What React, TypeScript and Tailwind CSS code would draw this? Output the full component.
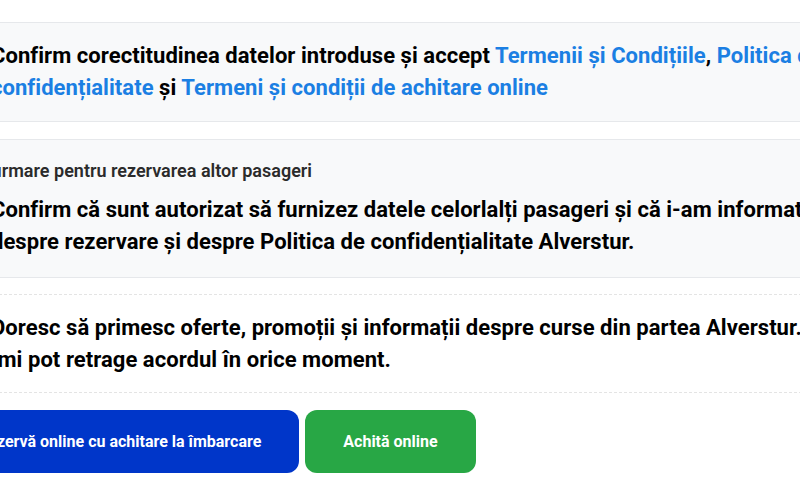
import React from 'react';

const link = 'text-[#1b7fe3] hover:underline';

function Check() {
  return <span className="mt-[6px] h-5 w-5 flex-shrink-0 rounded border border-gray-400 bg-white" />;
}

export default function App() {
  return (
    <div className="h-[500px] w-[800px] overflow-hidden bg-white" style={{ fontFamily: 'Roboto, "Noto Sans", sans-serif' }}>
      <div className="ml-[-66px] w-[918px] pt-[22px] text-black">

        {/* Terms */}
        <div className="mb-[17px] border border-[#e6e8eb] bg-[#f8f9fa] px-6 py-[17px]">
          <label className="flex gap-[12px] text-[22px] font-bold leading-[32px] tracking-[0.05px]">
            <Check />
            <span>
              Confirm corectitudinea datelor introduse și accept{' '}
              <a className={link}>Termenii și Condițiile</a>,{' '}
              <a className={link}>Politica de confidențialitate</a> și{' '}
              <a className={link}>Termeni și condiții de achitare online</a>
            </span>
          </label>
        </div>

        {/* Other passengers */}
        <div className="mb-4 border border-[#e6e8eb] bg-[#f8f9fa] px-6 pt-[19px] pb-[19px]">
          <p className="mb-[11px] text-[18px] font-semibold leading-6 text-[#2b2b2b]">
            Confirmare pentru rezervarea altor pasageri
          </p>
          <label className="flex gap-[12px] text-[22px] font-bold leading-[32px] tracking-[0.05px]">
            <Check />
            <span>
              Confirm că sunt autorizat să furnizez datele celorlalți pasageri și că i-am informat
              despre rezervare și despre Politica de confidențialitate Alverstur.
            </span>
          </label>
        </div>

        {/* Marketing */}
        <div className="border-y border-dashed border-[#e4e4e4] px-[25px] pt-[17px] pb-4">
          <label className="flex gap-[12px] text-[22px] font-bold leading-[32px] tracking-[0.05px]">
            <Check />
            <span>
              Doresc să primesc oferte, promoții și informații despre curse din partea Alverstur.
              Îmi pot retrage acordul în orice moment.
            </span>
          </label>
        </div>

        {/* Actions */}
        <div className="mt-[17px] flex gap-[6px] pl-[6px]">
          <button className="h-[63px] rounded-xl bg-[#0036c9] px-[38px] text-[16px] font-bold text-white">
            Rezervă online cu achitare la îmbarcare
          </button>
          <button className="h-[63px] rounded-xl bg-[#28a745] px-[38px] text-[16px] font-bold text-white">
            Achită online
          </button>
        </div>
      </div>
    </div>
  );
}
